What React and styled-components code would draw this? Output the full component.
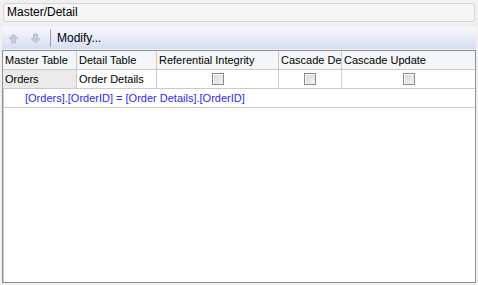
import React from "react";
import styled, { createGlobalStyle } from "styled-components";

const GlobalStyle = createGlobalStyle`
    html, body {
        margin: 0;
        padding: 0;
        background: #f0f0f0;
    }
    body {
        font-family: "Liberation Sans", Arial, sans-serif;
        font-size: 11px;
        color: #000;
    }
`;

const Page = styled.div`
    width: 478px;
    height: 285px;
    box-sizing: border-box;
    padding: 3px 2px 2px 2px;
    display: flex;
    flex-direction: column;
    background: #f0f0f0;
`;

const TitleBar = styled.div`
    height: 19px;
    box-sizing: border-box;
    margin: 0 1px 0 1px;
    padding: 0 0 1px 3px;
    display: flex;
    align-items: center;
    background: #f5f5f5;
    border: 1px solid #d5d5d5;
    border-radius: 3px;
    font-size: 12px;
`;

const Toolbar = styled.div`
    height: 22px;
    margin-top: 5px;
    display: flex;
    align-items: center;
    background: linear-gradient(to bottom, #f8f9fd 0%, #e9ecf8 45%, #d6ddf1 100%);
`;

const ToolButton = styled.span`
    width: 22px;
    height: 20px;
    display: flex;
    align-items: center;
    justify-content: center;
`;

const Separator = styled.span`
    width: 1px;
    height: 18px;
    margin: 0 4px 0 4px;
    background: #9aa2b4;
`;

const ToolText = styled.span`
    padding: 0 2px;
    font-size: 12px;
`;

const Grid = styled.div`
    flex: 1;
    margin-top: 1px;
    background: #fff;
    border: 1px solid #8e9296;
    box-shadow: inset 1px 1px 0 #c8c8c8;
    display: flex;
    flex-direction: column;
`;

const Row = styled.div`
    display: grid;
    grid-template-columns: 74px 80px 122px 63px 1fr;
    height: 18px;
    border-bottom: 1px solid #c9cbcf;
    background: ${(p) => (p.header ? "#f4f5f7" : "#fff")};
`;

const Cell = styled.div`
    display: flex;
    align-items: center;
    justify-content: ${(p) => (p.center ? "center" : "flex-start")};
    padding-left: ${(p) => (p.center ? "0" : "2px")};
    border-right: 1px solid #c9cbcf;
    background: ${(p) => (p.key1 ? "#eaeaea" : "transparent")};
    white-space: nowrap;
    overflow: hidden;
    font-size: 11px;
    &:last-child {
        border-right: none;
    }
`;

const CheckBox = styled.span`
    width: 12px;
    height: 12px;
    box-sizing: border-box;
    border: 1px solid #8a8a8a;
    background: linear-gradient(135deg, #d6d6d6 0%, #f4f4f4 100%);
    box-shadow: inset 1px 1px 0 #fff;
`;

const DetailRow = styled.div`
    height: 18px;
    display: flex;
    align-items: center;
    padding-left: 22px;
    color: #2b2bf2;
    font-size: 11px;
    border-bottom: 1px solid #c9cbcf;
`;

const Arrow = ({ down }) => (
    <svg width="11" height="11" viewBox="0 0 11 11">
        <path
            d={down ? "M3.5 1h4v4.5h2.5L5.5 10 1 5.5h2.5z" : "M3.5 10h4V5.5h2.5L5.5 1 1 5.5h2.5z"}
            fill="#c8ccd6"
            stroke="#b4b9c4"
            strokeWidth="0.8"
        />
    </svg>
);

const columns = ["Master Table", "Detail Table", "Referential Integrity", "Cascade De", "Cascade Update"];

export default function App() {
    return (
        <Page>
            <GlobalStyle />
            <TitleBar>Master/Detail</TitleBar>
            <Toolbar>
                <ToolButton>
                    <Arrow />
                </ToolButton>
                <ToolButton>
                    <Arrow down />
                </ToolButton>
                <Separator />
                <ToolText>Modify...</ToolText>
            </Toolbar>
            <Grid>
                <Row header>
                    {columns.map((c) => (
                        <Cell key={c}>{c}</Cell>
                    ))}
                </Row>
                <Row>
                    <Cell key1>Orders</Cell>
                    <Cell>Order Details</Cell>
                    <Cell center>
                        <CheckBox />
                    </Cell>
                    <Cell center>
                        <CheckBox />
                    </Cell>
                    <Cell center>
                        <CheckBox />
                    </Cell>
                </Row>
                <DetailRow>[Orders].[OrderID] = [Order Details].[OrderID]</DetailRow>
            </Grid>
        </Page>
    );
}
